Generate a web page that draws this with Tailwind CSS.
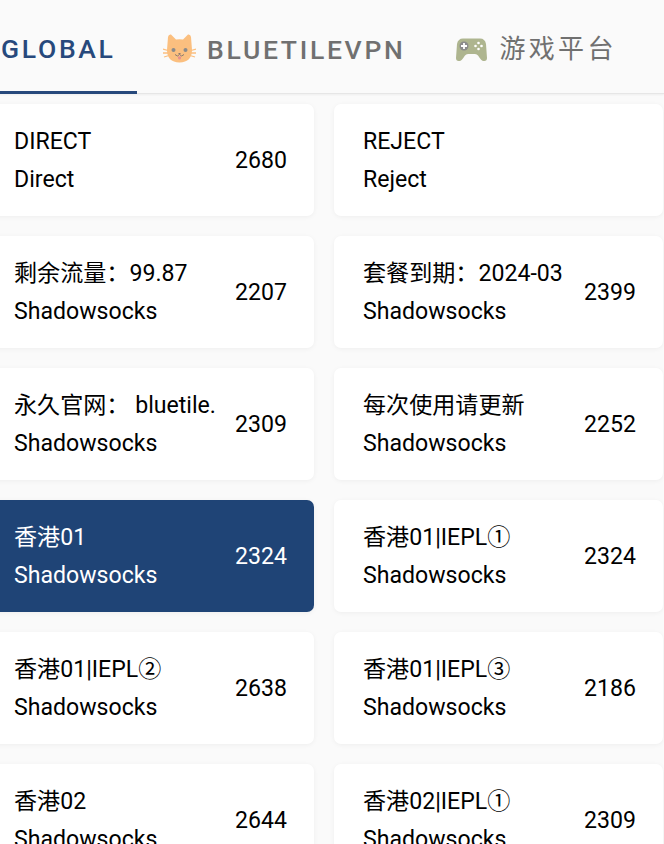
<!DOCTYPE html>
<html lang="en">
<head>
  <meta charset="UTF-8" />
  <title>Proxies</title>
  <script src="https://cdn.jsdelivr.net/npm/@tailwindcss/browser@4"></script>
</head>
<body class="bg-[#fafafa] w-[664px] h-[844px] overflow-hidden font-['Roboto','Noto_Sans_CJK_SC',sans-serif]">
  <!-- tabs -->
  <div class="h-[94px] flex items-stretch whitespace-nowrap text-[26.5px] font-medium tracking-[2.7px] text-[#707070] border-b border-[#e6e6e6] shadow-[0_1px_2px_rgba(0,0,0,0.05)] -ml-[22px]">
    <div class="w-[159px] shrink-0 pl-[23px] pt-[6px] flex items-center border-b-[3px] border-[#27497c] text-[#27497c] -mb-px">GLOBAL</div>
    <div class="shrink-0 pl-[26px] pr-[26px] pt-[6px] flex items-center gap-[11px]">
      <svg class="w-[33px] h-[29px] -mt-[2px]" viewBox="0 0 33 29">
        <path d="M8 0.500 L13 5.500 Q16.500 5 20 5.500 L25 0.500 Q27.500 0 28 3 L29 16 Q29 28 16.500 28.500 Q4 28 4 16 L5 3 Q5.500 0 8 0.500Z" fill="#fbbf7f"/>
        <path d="M0 15 L5 16.500 M0 19 L5 19 M1 23 L6 21.500 M33 15 L28 16.500 M33 19 L28 19 M32 23 L27 21.500" stroke="#fbbf7f" stroke-width="1.300"/>
        <circle cx="10.500" cy="16" r="2" fill="#8a8a8a"/>
        <circle cx="22.500" cy="16" r="2" fill="#8a8a8a"/>
        <path d="M15 19 h3 l-1.500 1.500z" fill="#8a7a70"/>
        <path d="M12 20.500 Q14.500 23.500 16.500 20.500 Q18.500 23.500 21 20.500" fill="none" stroke="#8a7a70" stroke-width="1"/>
        <path d="M15 22.500 h3 v1.500 a1.500 1.500 0 0 1 -3 0z" fill="#e58f8f"/>
      </svg>
      <span>BLUETILEVPN</span>
    </div>
    <div class="shrink-0 pl-6 pt-[6px] flex items-center gap-[13px] font-normal tracking-[3.3px] text-[26px]">
      <svg class="w-[31px] h-[24px]" viewBox="0 0 31 24">
        <path d="M7 0.500 H24 Q29 0.500 30 6 L31 20 Q31 23.500 27.500 23 Q25.500 23 22 17.500 Q21 16 19 16 H12 Q10 16 9 17.500 Q5.500 23 3.500 23 Q0 23.500 0 20 L1 6 Q2 0.500 7 0.500Z" fill="#aeb58f"/>
        <circle cx="8" cy="8" r="4.500" fill="#8b8b8b"/>
        <path d="M8 5 v6 M5 8 h6" stroke="#fff" stroke-width="1.800"/>
        <circle cx="22.500" cy="5" r="1.300" fill="#fff"/>
        <circle cx="22.500" cy="11" r="1.300" fill="#fff"/>
        <circle cx="19.500" cy="8" r="1.300" fill="#fff"/>
        <circle cx="25.500" cy="8" r="1.300" fill="#fff"/>
      </svg>
      <span>游戏平台</span>
    </div>
  </div>

  <!-- proxy cards -->
  <div class="grid grid-cols-[329px_329px] gap-x-5 gap-y-5 -ml-[15px] pt-[10px] text-[23.1px] leading-[38px] text-black">
    <div class="h-[112px] pt-[1px] rounded-[7px] bg-white shadow-[0_1px_5px_rgba(0,0,0,0.05)] pl-[29px] pr-[27px] flex items-center">
      <div class="flex-1 min-w-0 mr-[19px] overflow-hidden whitespace-nowrap"><div>DIRECT</div><div>Direct</div></div>
      <div>2680</div>
    </div>
    <div class="h-[112px] pt-[1px] rounded-[7px] bg-white shadow-[0_1px_5px_rgba(0,0,0,0.05)] pl-[29px] pr-[27px] flex items-center">
      <div class="flex-1 min-w-0 mr-[19px] overflow-hidden whitespace-nowrap"><div>REJECT</div><div>Reject</div></div>
    </div>
    <div class="h-[112px] pt-[1px] rounded-[7px] bg-white shadow-[0_1px_5px_rgba(0,0,0,0.05)] pl-[29px] pr-[27px] flex items-center">
      <div class="flex-1 min-w-0 mr-[19px] overflow-hidden whitespace-nowrap"><div>剩余流量：99.87</div><div>Shadowsocks</div></div>
      <div>2207</div>
    </div>
    <div class="h-[112px] pt-[1px] rounded-[7px] bg-white shadow-[0_1px_5px_rgba(0,0,0,0.05)] pl-[29px] pr-[27px] flex items-center">
      <div class="flex-1 min-w-0 mr-[19px] overflow-hidden whitespace-nowrap"><div>套餐到期：2024-03</div><div>Shadowsocks</div></div>
      <div>2399</div>
    </div>
    <div class="h-[112px] pt-[1px] rounded-[7px] bg-white shadow-[0_1px_5px_rgba(0,0,0,0.05)] pl-[29px] pr-[27px] flex items-center">
      <div class="flex-1 min-w-0 mr-[19px] overflow-hidden whitespace-nowrap"><div>永久官网： bluetile.</div><div>Shadowsocks</div></div>
      <div>2309</div>
    </div>
    <div class="h-[112px] pt-[1px] rounded-[7px] bg-white shadow-[0_1px_5px_rgba(0,0,0,0.05)] pl-[29px] pr-[27px] flex items-center">
      <div class="flex-1 min-w-0 mr-[19px] overflow-hidden whitespace-nowrap"><div>每次使用请更新</div><div>Shadowsocks</div></div>
      <div>2252</div>
    </div>
    <div class="h-[112px] pt-[1px] rounded-[7px] bg-[#1f4476] text-white shadow-[0_1px_5px_rgba(0,0,0,0.05)] pl-[29px] pr-[27px] flex items-center">
      <div class="flex-1 min-w-0 mr-[19px] overflow-hidden whitespace-nowrap"><div>香港01</div><div>Shadowsocks</div></div>
      <div>2324</div>
    </div>
    <div class="h-[112px] pt-[1px] rounded-[7px] bg-white shadow-[0_1px_5px_rgba(0,0,0,0.05)] pl-[29px] pr-[27px] flex items-center">
      <div class="flex-1 min-w-0 mr-[19px] overflow-hidden whitespace-nowrap"><div>香港01|IEPL①</div><div>Shadowsocks</div></div>
      <div>2324</div>
    </div>
    <div class="h-[112px] pt-[1px] rounded-[7px] bg-white shadow-[0_1px_5px_rgba(0,0,0,0.05)] pl-[29px] pr-[27px] flex items-center">
      <div class="flex-1 min-w-0 mr-[19px] overflow-hidden whitespace-nowrap"><div>香港01|IEPL②</div><div>Shadowsocks</div></div>
      <div>2638</div>
    </div>
    <div class="h-[112px] pt-[1px] rounded-[7px] bg-white shadow-[0_1px_5px_rgba(0,0,0,0.05)] pl-[29px] pr-[27px] flex items-center">
      <div class="flex-1 min-w-0 mr-[19px] overflow-hidden whitespace-nowrap"><div>香港01|IEPL③</div><div>Shadowsocks</div></div>
      <div>2186</div>
    </div>
    <div class="h-[112px] pt-[1px] rounded-[7px] bg-white shadow-[0_1px_5px_rgba(0,0,0,0.05)] pl-[29px] pr-[27px] flex items-center">
      <div class="flex-1 min-w-0 mr-[19px] overflow-hidden whitespace-nowrap"><div>香港02</div><div>Shadowsocks</div></div>
      <div>2644</div>
    </div>
    <div class="h-[112px] pt-[1px] rounded-[7px] bg-white shadow-[0_1px_5px_rgba(0,0,0,0.05)] pl-[29px] pr-[27px] flex items-center">
      <div class="flex-1 min-w-0 mr-[19px] overflow-hidden whitespace-nowrap"><div>香港02|IEPL①</div><div>Shadowsocks</div></div>
      <div>2309</div>
    </div>
  </div>
</body>
</html>
